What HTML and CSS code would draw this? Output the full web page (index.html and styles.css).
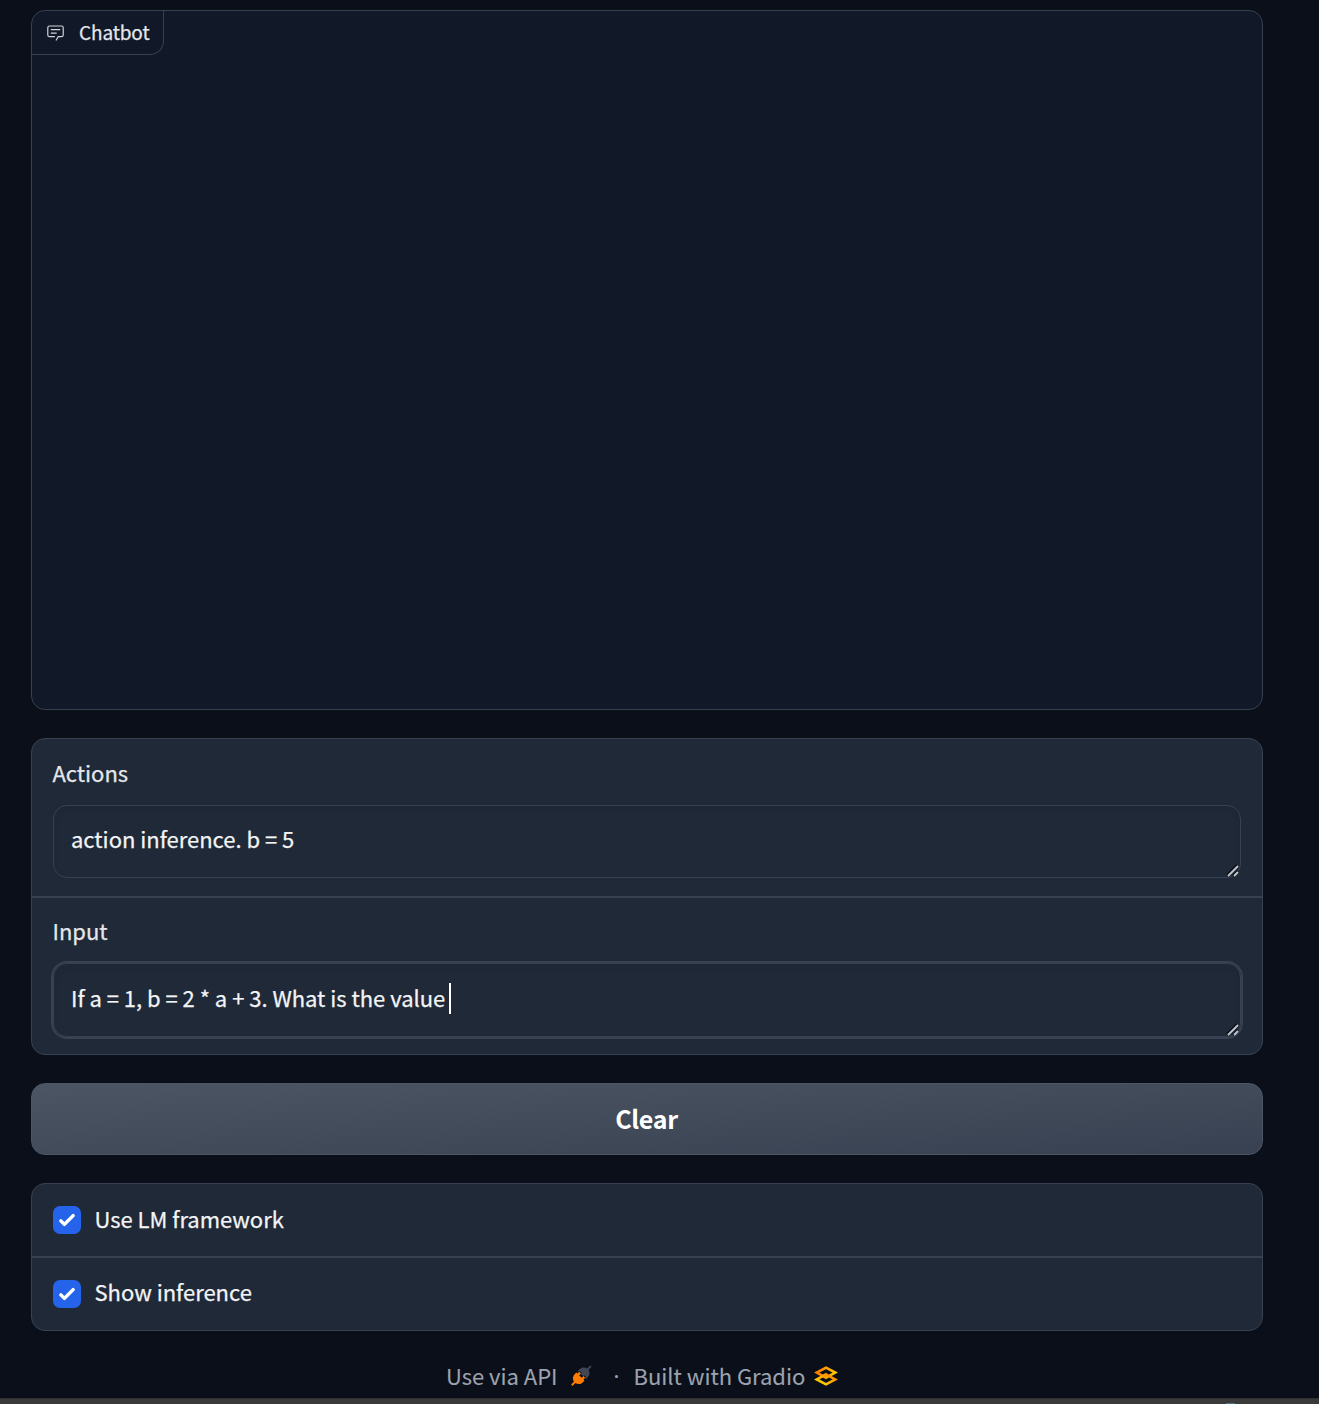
FILE: index.html
```html
<!DOCTYPE html>
<html lang="en">
<head>
<meta charset="utf-8">
<title>Gradio</title>
<link rel="stylesheet" href="styles.css">
</head>
<body>
<main class="app">
  <section class="chatbot">
    <div class="chatbot-label">
      <svg class="chat-icon" viewBox="0 0 32 32"><path fill="currentColor" d="M17.74 30 16 29l4-7h6a2 2 0 0 0 2-2V8a2 2 0 0 0-2-2H6a2 2 0 0 0-2 2v12a2 2 0 0 0 2 2h9v2H6a4 4 0 0 1-4-4V8a4 4 0 0 1 4-4h20a4 4 0 0 1 4 4v12a4 4 0 0 1-4 4h-4.84Z"/><path fill="currentColor" d="M8 10h16v2H8zm0 6h10v2H8z"/></svg>
      <span>Chatbot</span>
    </div>
  </section>

  <section class="panel">
    <div class="field">
      <div class="field-label"><span>Actions</span></div>
      <div class="textbox">
        <span>action inference. b = 5</span>
        <svg class="grip" viewBox="0 0 13 13"><path class="grip-shade" d="M1 11 11 1M7 12l5-5"/><path class="grip-line" d="M2 12 12 2M8 12l4-4"/></svg>
      </div>
    </div>
    <div class="field">
      <div class="field-label"><span>Input</span></div>
      <div class="textbox focused">
        <span>If a = 1, b = 2 * a + 3. What is the value</span><i class="caret"></i>
        <svg class="grip" viewBox="0 0 13 13"><path class="grip-shade" d="M1 11 11 1M7 12l5-5"/><path class="grip-line" d="M2 12 12 2M8 12l4-4"/></svg>
      </div>
    </div>
  </section>

  <button class="clear"><span>Clear</span></button>

  <section class="panel">
    <label class="check-row">
      <svg class="check" viewBox="0 0 16 16"><path fill="#fff" d="M12.207 4.793a1 1 0 0 1 0 1.414l-5 5a1 1 0 0 1-1.414 0l-2-2a1 1 0 0 1 1.414-1.414L6.500 9.086l4.293-4.293a1 1 0 0 1 1.414 0z"/></svg>
      <span>Use LM framework</span>
    </label>
    <label class="check-row">
      <svg class="check" viewBox="0 0 16 16"><path fill="#fff" d="M12.207 4.793a1 1 0 0 1 0 1.414l-5 5a1 1 0 0 1-1.414 0l-2-2a1 1 0 0 1 1.414-1.414L6.500 9.086l4.293-4.293a1 1 0 0 1 1.414 0z"/></svg>
      <span>Show inference</span>
    </label>
  </section>
</main>

<footer class="footer">
  <span>Use via API</span>
  <svg class="plug" viewBox="0 0 22 22"><g transform="rotate(45 11 11)"><path fill="#ff7c00" d="M5.300 11.800h11.400v2.200c0 3.500-2 5.300-4.700 6v4h-2v-4c-2.700-.7-4.700-2.500-4.700-6z"/><path fill="#ff7c00" d="M6.800 9.300h2.400v3H6.800zm6 0h2.400v3h-2.400z"/><path fill="#3f4757" d="M5.300 9.700V7.300c0-3.300 2-5.200 4.700-5.800v-4.500h2v4.500c2.700.6 4.700 2.500 4.700 5.800v2.400h-1.500V8.300h-2.400v1.400H9.200V8.300H6.800v1.400z"/></g></svg>
  <span class="dot">·</span>
  <span>Built with Gradio</span>
  <svg class="gradio" viewBox="0 0 24 20">
    <defs><linearGradient id="gold" x1="0" y1="1" x2="1" y2="0"><stop offset="0" stop-color="#ffe000"/><stop offset="1" stop-color="#ff7c00"/></linearGradient><linearGradient id="amber" x1="0" y1="0" x2="1" y2="0"><stop offset="0" stop-color="#ff7c00"/><stop offset="1" stop-color="#ffc800"/></linearGradient></defs>
    <path fill="none" stroke="url(#amber)" stroke-width="2.500" d="M12 1.700 21.300 6.600 12 11.700 2.700 6.600z"/>
    <path fill="none" stroke="url(#gold)" stroke-width="2.500" d="M12 8.300 21.300 13.400 12 18.300 2.700 13.400z"/>
  </svg>
</footer>
<div class="window-edge"><i></i></div>
</body>
</html>
```
FILE: styles.css
```css
* { box-sizing: border-box; }
body {
  margin: 0;
  height: 1404px;
  overflow: hidden;
  display: flex;
  flex-direction: column;
  background: #0b0f19;
  color: #f3f4f6;
  font: 22px/36px "Noto Sans CJK SC", sans-serif;
  letter-spacing: -.02px;
}
span { white-space: pre; -webkit-text-stroke: .25px currentColor; }
.app {
  display: flex;
  flex-direction: column;
  gap: 28px;
  width: 1232px;
  margin: 10px 0 0 31px;
}
.chatbot {
  height: 700px;
  border: 1px solid #374151;
  border-radius: 14px;
  background: #111827;
  overflow: hidden;
}
.chatbot-label {
  display: flex;
  align-items: center;
  width: 132px;
  height: 44px;
  padding: 0 0 2px 14px;
  gap: 14px;
  border: solid #374151;
  border-width: 0 1px 1px 0;
  border-radius: 0 0 14px 0;
  color: #e5e7eb;
  font-size: 19px;
  letter-spacing: -.12px;
}
.chat-icon { width: 19px; height: 19px; margin-top: 2px; color: #d1d5db; }
.panel {
  border: 1px solid #374151;
  border-radius: 14px;
  background: #1f2937;
}
.field { height: 157px; padding: 15px 21px 0; }
.field + .field { height: 158px; border-top: 2px solid #374151; padding-top: 14px; }
.field-label { height: 51px; color: #e5e7eb; }
.field-label span { margin-left: -.5px; }
.textbox {
  position: relative;
  display: flex;
  align-items: center;
  height: 73px;
  padding: 0 0 7px 17px;
  border: 1px solid #374151;
  border-radius: 14px;
  box-shadow: inset 0 4px 7px rgba(0, 0, 0, .05);
}
.focused {
  height: 74px;
  box-shadow: 0 0 0 2px #374151, inset 0 4px 7px rgba(0, 0, 0, .05);
}
.caret { width: 2px; height: 31px; margin: 4px 0 0 4px; background: #fff; }
.grip { position: absolute; right: 1px; bottom: 0; width: 13px; height: 13px; }
.grip path { fill: none; stroke-width: 1.800; }
.grip .grip-shade { stroke: #080c14; }
.grip .grip-line { stroke: #c4c7cc; }
.clear {
  height: 72px;
  padding: 0 1px 2px 0;
  border: 1px solid #4b5563;
  border-radius: 14px;
  background: linear-gradient(to bottom right, #4b5563, #374151);
  color: #fff;
  font: bold 25px/36px "Noto Sans CJK SC", sans-serif;
  letter-spacing: -.3px;
}
.clear span { -webkit-text-stroke: 0; }
.check-row {
  display: flex;
  align-items: center;
  gap: 13.500px;
  height: 72px;
  padding-left: 21px;
}
.check-row span { padding-bottom: 4px; }
.check-row + .check-row { height: 74px; border-top: 2px solid #374151; }
.check-row + .check-row span { padding-bottom: 6px; }
.check { width: 28px; height: 28px; border-radius: 7px; background: #2563eb; }
.footer {
  display: flex;
  align-items: center;
  height: 36px;
  margin: 26px 0 0 446px;
  color: #9ca3af;
}
.footer span { -webkit-text-stroke-width: .1px; }
.plug { width: 22px; height: 22px; margin: 1px 0 0 12px; }
.footer .dot { width: 6px; margin: 0 14px 0 22px; font-family: "Noto Sans", sans-serif; text-align: center; }
.gradio { width: 24px; height: 20px; margin: 2px 0 0 9px; }
.window-edge { height: 6px; margin-top: auto; background: #3b3a3a; border-top: 1px solid #302f31; }
.window-edge i { display: block; width: 9px; height: 1px; margin: 4px 0 0 1226px; background: #477783; }
```
